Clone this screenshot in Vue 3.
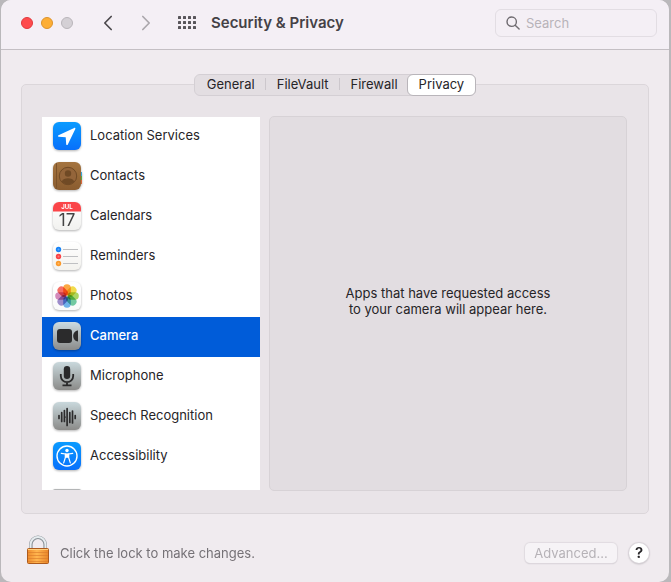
<template>
  <div class="window">
    <header class="toolbar">
      <div class="lights">
        <button class="light red" aria-label="Close"></button>
        <button class="light yellow" aria-label="Minimize"></button>
        <button class="light gray" aria-label="Zoom" disabled></button>
      </div>
      <div class="nav">
        <button class="icon-button" aria-label="Back">
          <svg width="10" height="16" viewBox="0 0 10 16"><path d="M8.2 1.5 1.8 8l6.4 6.5" fill="none" stroke="#4c494d" stroke-width="1.7" stroke-linecap="round" stroke-linejoin="round" /></svg>
        </button>
        <button class="icon-button" aria-label="Forward" disabled>
          <svg width="10" height="16" viewBox="0 0 10 16"><path d="M1.8 1.5 8.2 8l-6.4 6.5" fill="none" stroke="#aba7ac" stroke-width="1.7" stroke-linecap="round" stroke-linejoin="round" /></svg>
        </button>
      </div>
      <button class="icon-button" aria-label="Show All">
        <svg width="18" height="14" viewBox="0 0 18 14" fill="#58555a">
          <template v-for="row in 3" :key="row">
            <rect v-for="col in 4" :key="col" :x="(col - 1) * 5" :y="(row - 1) * 5" width="3" height="3" rx="0.6" />
          </template>
        </svg>
      </button>
      <h1>Security &amp; Privacy</h1>
      <label class="search">
        <svg width="14" height="14" viewBox="0 0 14 14" fill="none" stroke="#706c71" stroke-width="1.4" stroke-linecap="round"><circle cx="5.7" cy="5.7" r="4.7" /><path d="m9.2 9.2 3.9 3.9" /></svg>
        <input v-model="query" type="text" placeholder="Search" aria-label="Search" />
      </label>
    </header>

    <main class="content">
      <nav class="tabs" role="tablist">
        <button
          v-for="tab in tabs"
          :key="tab"
          role="tab"
          :aria-selected="tab === activeTab"
          :class="['tab', { active: tab === activeTab }]"
          @click="activeTab = tab"
        >{{ tab }}</button>
      </nav>

      <section class="box">
        <ul class="services">
          <li v-for="item in services" :key="item.id">
            <button :class="['service', { selected: item.id === selected }]" @click="selected = item.id">
              <svg class="service-icon" width="30" height="32" viewBox="0 0 30 32">
                <defs>
                  <linearGradient :id="`fill-${item.id}`" x1="0" y1="0" x2="0" y2="1">
                    <stop offset="0" :stop-color="item.colors[0]" />
                    <stop offset="1" :stop-color="item.colors[1]" />
                  </linearGradient>
                </defs>
                <template v-if="item.id === 'contacts'">
                  <path d="M27 12h3v4h-3z" fill="#38a4d8" />
                  <path d="M27 16h3v4h-3z" fill="#58a944" />
                  <path d="M27 20h3v4h-3z" fill="#d9683b" />
                </template>
                <rect v-if="item.id !== 'folders'" x="1" y="2" width="28" height="28" rx="6" :fill="`url(#fill-${item.id})`" />

                <path v-if="item.id === 'location'" d="M22.2 7.9 6.5 15.2c-.9.4-.7 1.5.3 1.6l6.9.4.5 7c.1 1 1.2 1.2 1.6.3L23.3 9.1c.4-.9-.3-1.6-1.1-1.2Z" fill="#fff" />

                <template v-else-if="item.id === 'contacts'">
                  <path d="M4.5 3.2v25.6" stroke="#7b5229" />
                  <circle cx="16" cy="16" r="8.7" fill="#94653a" stroke="#704a25" />
                  <circle cx="16" cy="13.5" r="3.2" fill="#704a25" />
                  <path d="M9.8 21.5c1.4-4.4 11-4.4 12.4 0-3.2 3.8-9.2 3.8-12.4 0Z" fill="#704a25" />
                </template>

                <template v-else-if="item.id === 'calendars'">
                  <path d="M1 11.5V8a6 6 0 0 1 6-6h16a6 6 0 0 1 6 6v3.5Z" fill="#fa4549" />
                  <text x="15" y="9" class="month">JUL</text>
                  <text x="15" y="26" class="day">17</text>
                </template>

                <template v-else-if="item.id === 'reminders'">
                  <g v-for="(color, i) in ['#1683f7', '#fa4447', '#fb9a2b']" :key="color">
                    <circle cx="6.5" :cy="9.5 + i * 7" r="2.7" :fill="color" />
                    <circle cx="6.5" :cy="9.5 + i * 7" r="1" fill="#fff" fill-opacity="0.3" />
                    <path :d="`M11 ${9.5 + i * 7}h15`" stroke="#bfc0c2" />
                  </g>
                </template>

                <g v-else-if="item.id === 'photos'">
                  <g class="petals">
                    <rect v-for="(color, i) in petals" :key="color" x="11.2" y="4.2" width="7.6" height="11.2" rx="3.7" :fill="color" fill-opacity="0.85" :transform="`rotate(${i * 45} 15 16)`" />
                  </g>
                </g>

                <template v-else-if="item.id === 'camera'">
                  <rect x="5" y="9" width="15" height="14" rx="3" fill="#2b2b2c" />
                  <path d="M26 10.6v10.8c-2.7 0-4.8-2.7-4.8-5.4s2.1-5.4 4.8-5.4Z" fill="#2b2b2c" />
                </template>

                <template v-else-if="item.id === 'microphone'">
                  <rect x="11.8" y="6" width="6.4" height="13" rx="3.2" fill="#29292a" />
                  <path d="M8.8 14v2a6.2 6.2 0 0 0 12.4 0v-2M15 22v3.2M10.5 25.3h9" fill="none" stroke="#29292a" stroke-width="1.8" />
                </template>

                <path v-else-if="item.id === 'speech'" d="M7 15.5v3M9.7 12.5v9M12.4 10.5v11M13.1 17ZM15.1 8.5v17M17.8 12.5v10M20.5 11v12M23.2 15.5v3" stroke="#2c2c2d" stroke-width="1.7" stroke-linecap="round" />

                <template v-else-if="item.id === 'accessibility'">
                  <circle cx="15" cy="16" r="10" fill="none" stroke="#fff" stroke-width="1.4" />
                  <circle cx="15" cy="10.5" r="1.7" fill="#fff" />
                  <path d="m9.3 13.3 4 .7v3.6l-1.6 5.3M20.7 13.3l-4 .7v3.6l1.6 5.3" fill="none" stroke="#fff" stroke-width="1.2" stroke-linecap="round" />
                  <path d="M13 13.4h4v4.4h-4z" fill="#fff" />
                </template>

                <rect v-else-if="item.id === 'folders'" x="1" y="9" width="28" height="20" rx="2" :fill="`url(#fill-${item.id})`" />
              </svg>
              <span>{{ item.label }}</span>
            </button>
          </li>
        </ul>

        <div class="detail">
          <p>Apps that have requested access<br />to your camera will appear here.</p>
        </div>
      </section>
    </main>

    <footer class="footer">
      <button class="lock">
        <svg width="24" height="30" viewBox="0 0 24 30">
          <defs>
            <linearGradient id="lock-body" x1="0" y1="0" x2="1" y2="0">
              <stop offset="0" stop-color="#ee8b2c" />
              <stop offset="0.45" stop-color="#ffb650" />
              <stop offset="1" stop-color="#e98527" />
            </linearGradient>
          </defs>
          <path d="M4.8 14V9.5a7.2 7.2 0 0 1 14.4 0V14" fill="none" stroke="#8a9298" stroke-width="3.6" />
          <path d="M4.5 14V9.5a7.5 7.5 0 0 1 15 0V14" fill="none" stroke="#e6ecef" stroke-width="2" />
          <rect x="1.5" y="13.5" width="21" height="15" rx="1" fill="url(#lock-body)" stroke="#ad5a1d" />
          <path d="M2 14.5h20" stroke="#ffd180" />
          <path d="M2 17.5h20M2 20.5h20M2 23.5h20M2 26.5h20" stroke="#d8792a" stroke-opacity="0.6" />
        </svg>
        <span>Click the lock to make changes.</span>
      </button>
      <button class="advanced" disabled>Advanced...</button>
      <button class="help" aria-label="Help">?</button>
    </footer>
  </div>
</template>

<script setup>
import { ref } from 'vue'

const query = ref('')
const tabs = ['General', 'FileVault', 'Firewall', 'Privacy']
const activeTab = ref('Privacy')
const selected = ref('camera')

const petals = ['#fb9a22', '#f0d62c', '#a0d148', '#5cc394', '#58a8ea', '#8f7ac6', '#cf78b2', '#f5574b']

const services = [
  { id: 'location', label: 'Location Services', colors: ['#0a9bff', '#0870fb'] },
  { id: 'contacts', label: 'Contacts', colors: ['#a47440', '#8a5c2f'] },
  { id: 'calendars', label: 'Calendars', colors: ['#ffffff', '#f1f1ef'] },
  { id: 'reminders', label: 'Reminders', colors: ['#ffffff', '#f3f2ee'] },
  { id: 'photos', label: 'Photos', colors: ['#ffffff', '#fafafa'] },
  { id: 'camera', label: 'Camera', colors: ['#cbdbe2', '#8b8b8a'] },
  { id: 'microphone', label: 'Microphone', colors: ['#c9d8dc', '#8b8b89'] },
  { id: 'speech', label: 'Speech Recognition', colors: ['#c9d8dc', '#8b8b89'] },
  { id: 'accessibility', label: 'Accessibility', colors: ['#0a9bff', '#0870fb'] },
  // only the top edge of this one shows until the list is scrolled
  { id: 'folders', label: '', colors: ['#b4b6b7', '#8b8b89'] }
]
</script>

<style>
body {
  background: #bab8bb;
}
</style>

<style scoped>
.window {
  display: flex;
  flex-direction: column;
  box-sizing: border-box;
  height: 100vh;
  margin: 0 2px 0 1px;
  border-radius: 10px;
  overflow: hidden;
  background: #f0ebef;
  color: #262427;
  font-family: Inter, "Liberation Sans", sans-serif;
  font-size: 13px;
  line-height: 16px;
}

button {
  margin: 0;
  padding: 0;
  border: none;
  background: none;
  color: inherit;
  font: inherit;
}

.toolbar {
  display: flex;
  flex: none;
  align-items: center;
  box-sizing: border-box;
  height: 50px;
  padding: 0 12px 4px 20px;
  border-bottom: 1px solid #c4bfc4;
  background: #f4eff5;
}

.lights {
  display: flex;
  gap: 8px;
}

.light {
  box-sizing: border-box;
  width: 12px;
  height: 12px;
  border-radius: 50%;
}

.red {
  border: 1px solid #e2383c;
  background: #fe4b4d;
}

.yellow {
  border: 1px solid #dd932b;
  background: #fdae35;
}

.gray {
  border: 1px solid #b9b5ba;
  background: #d4d0d5;
}

.nav {
  display: flex;
  gap: 28px;
  margin: 0 27px 0 30px;
}

.icon-button {
  display: flex;
}

h1 {
  margin: 0 auto 0 15px;
  color: #444146;
  font-size: 15px;
  font-weight: 600;
  line-height: 20px;
}

.search {
  display: flex;
  align-items: center;
  gap: 6px;
  box-sizing: border-box;
  width: 162px;
  height: 28px;
  padding: 0 10px;
  border: 1px solid #e2dde3;
  border-radius: 6px;
}

.search input {
  flex: 1;
  min-width: 0;
  padding: 0;
  border: none;
  outline: none;
  background: none;
  color: inherit;
  font: inherit;
}

.search input::placeholder {
  color: #b8b3b9;
  opacity: 1;
}

.content {
  display: flex;
  flex: 1;
  flex-direction: column;
  min-height: 0;
  padding: 24px 20px 0;
}

.tabs {
  display: flex;
  z-index: 1;
  align-self: center;
  box-sizing: border-box;
  height: 22px;
  margin-bottom: -12px;
  padding-left: 2px;
  border: 1px solid #d4cfd4;
  border-radius: 6px;
  background: #e3dee2;
}

.tab {
  display: flex;
  align-items: center;
  padding: 0 10px 2px;
}

.tab:not(.active) + .tab:not(.active)::before {
  width: 1px;
  height: 12px;
  margin: 0 11px 0 -10px;
  background: #ccc7cc;
  content: "";
}

.tab.active {
  margin: -1px;
  padding: 0 11px 2px;
  border: 1px solid #b9b5ba;
  border-radius: 6px;
  background: #fff;
}

.box {
  display: flex;
  flex: 1;
  gap: 9px;
  box-sizing: border-box;
  min-height: 0;
  padding: 31px 21px 22px 20px;
  border: 1px solid #dbd6da;
  border-radius: 5px;
  background: #e9e4e8;
}

.services {
  flex: none;
  box-sizing: border-box;
  width: 218px;
  margin: 1px 0;
  padding: 0;
  overflow-y: auto;
  background: #fff;
  list-style: none;
  scrollbar-width: none;
}

.service {
  display: flex;
  align-items: center;
  gap: 8px;
  width: 100%;
  height: 40px;
  padding: 0 10px 2px;
  text-align: left;
}

.service span {
  padding-bottom: 2px;
}

.service-icon {
  flex: none;
  filter: drop-shadow(0 1px 1px rgba(0, 0, 0, 0.3));
}

.service.selected {
  background: #005cd9;
  color: #fff;
  font-weight: 500;
}

.month {
  fill: #fff;
  font-size: 6px;
  font-weight: 700;
  text-anchor: middle;
}

.day {
  fill: #444;
  font-size: 17px;
  text-anchor: middle;
}

.petals rect {
  mix-blend-mode: multiply;
}

.detail {
  display: flex;
  flex: 1;
  align-items: center;
  justify-content: center;
  border: 1px solid #d7d2d6;
  border-radius: 5px;
  background: #e2dde1;
  text-align: center;
}

.detail p {
  margin: 0;
  padding-bottom: 6px;
}

.footer {
  display: flex;
  flex: none;
  align-items: center;
  box-sizing: border-box;
  height: 68px;
  padding: 10px 20px 0 25px;
}

.lock {
  display: flex;
  align-items: center;
  gap: 10px;
  margin-right: auto;
  color: #757176;
}

.lock svg {
  margin-bottom: 6px;
}

.advanced {
  width: 92px;
  height: 20px;
  border-radius: 5px;
  background: #f6f3f6;
  box-shadow: 0 0 1px 1px #e0dbe0, 0 1px 1px #bdb8bd;
  color: #b6b2b7;
}

.help {
  width: 20px;
  height: 20px;
  margin-left: 12px;
  border-radius: 50%;
  background: #fff;
  box-shadow: 0 0 1px 1px #d9d4d9, 0 1px 2px #a5a1a5;
  font-size: 15px;
  font-weight: 600;
}
</style>
